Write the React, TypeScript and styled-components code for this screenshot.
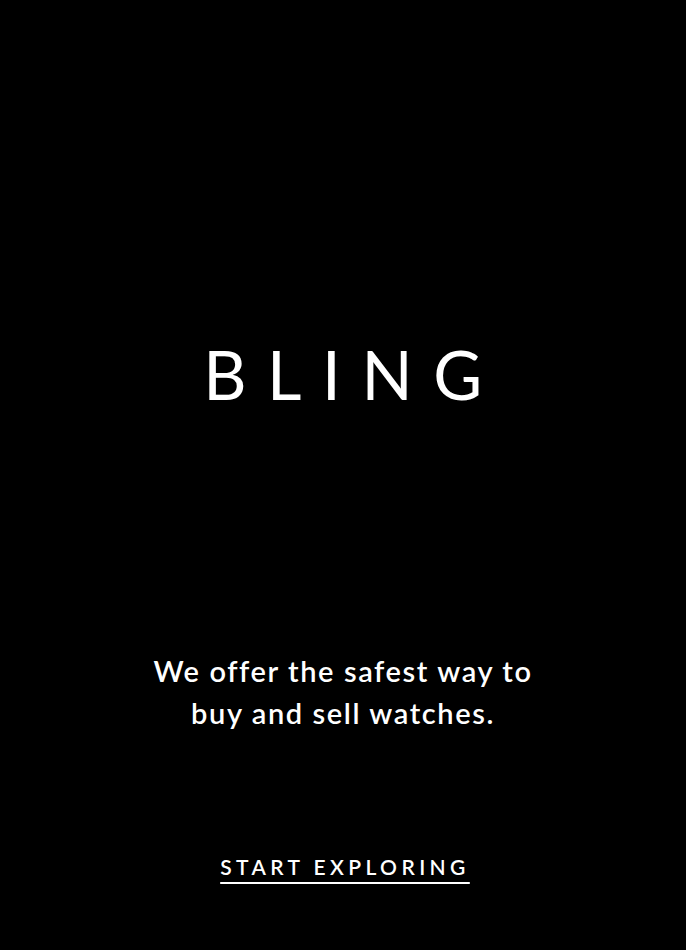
import React from 'react';
import styled, { createGlobalStyle } from 'styled-components';

const GlobalStyle = createGlobalStyle`
  html, body {
    margin: 0;
    padding: 0;
    background: #000;
  }
  * {
    box-sizing: border-box;
  }
`;

const Screen = styled.main`
  width: 686px;
  height: 950px;
  background: #000;
  color: #fff;
  font-family: 'Lato', 'Noto Sans', sans-serif;
  display: flex;
  flex-direction: column;
  align-items: center;
`;

const Logo = styled.h1`
  margin: 334px 0 0;
  font-size: 67px;
  font-weight: 400;
  line-height: 80px;
  letter-spacing: 20.6px;
  padding-left: 20px;
`;

const Tagline = styled.p`
  margin: 236px 0 0;
  font-size: 29px;
  font-weight: 600;
  line-height: 42px;
  letter-spacing: 1.6px;
  text-align: center;
  max-width: 410px;
`;

const ExploreLink = styled.a`
  margin-top: 120px;
  font-size: 21px;
  font-weight: 600;
  letter-spacing: 4.4px;
  padding-left: 4px;
  color: #fff;
  text-decoration: underline;
  text-underline-offset: 7px;
  text-decoration-thickness: 2px;
  cursor: pointer;
`;

export default function App() {
  return (
    <React.Fragment>
      <GlobalStyle />
      <Screen>
        <Logo>BLING</Logo>
        <Tagline>We offer the safest way to buy and sell watches.</Tagline>
        <ExploreLink>START EXPLORING</ExploreLink>
      </Screen>
    </React.Fragment>
  );
}
